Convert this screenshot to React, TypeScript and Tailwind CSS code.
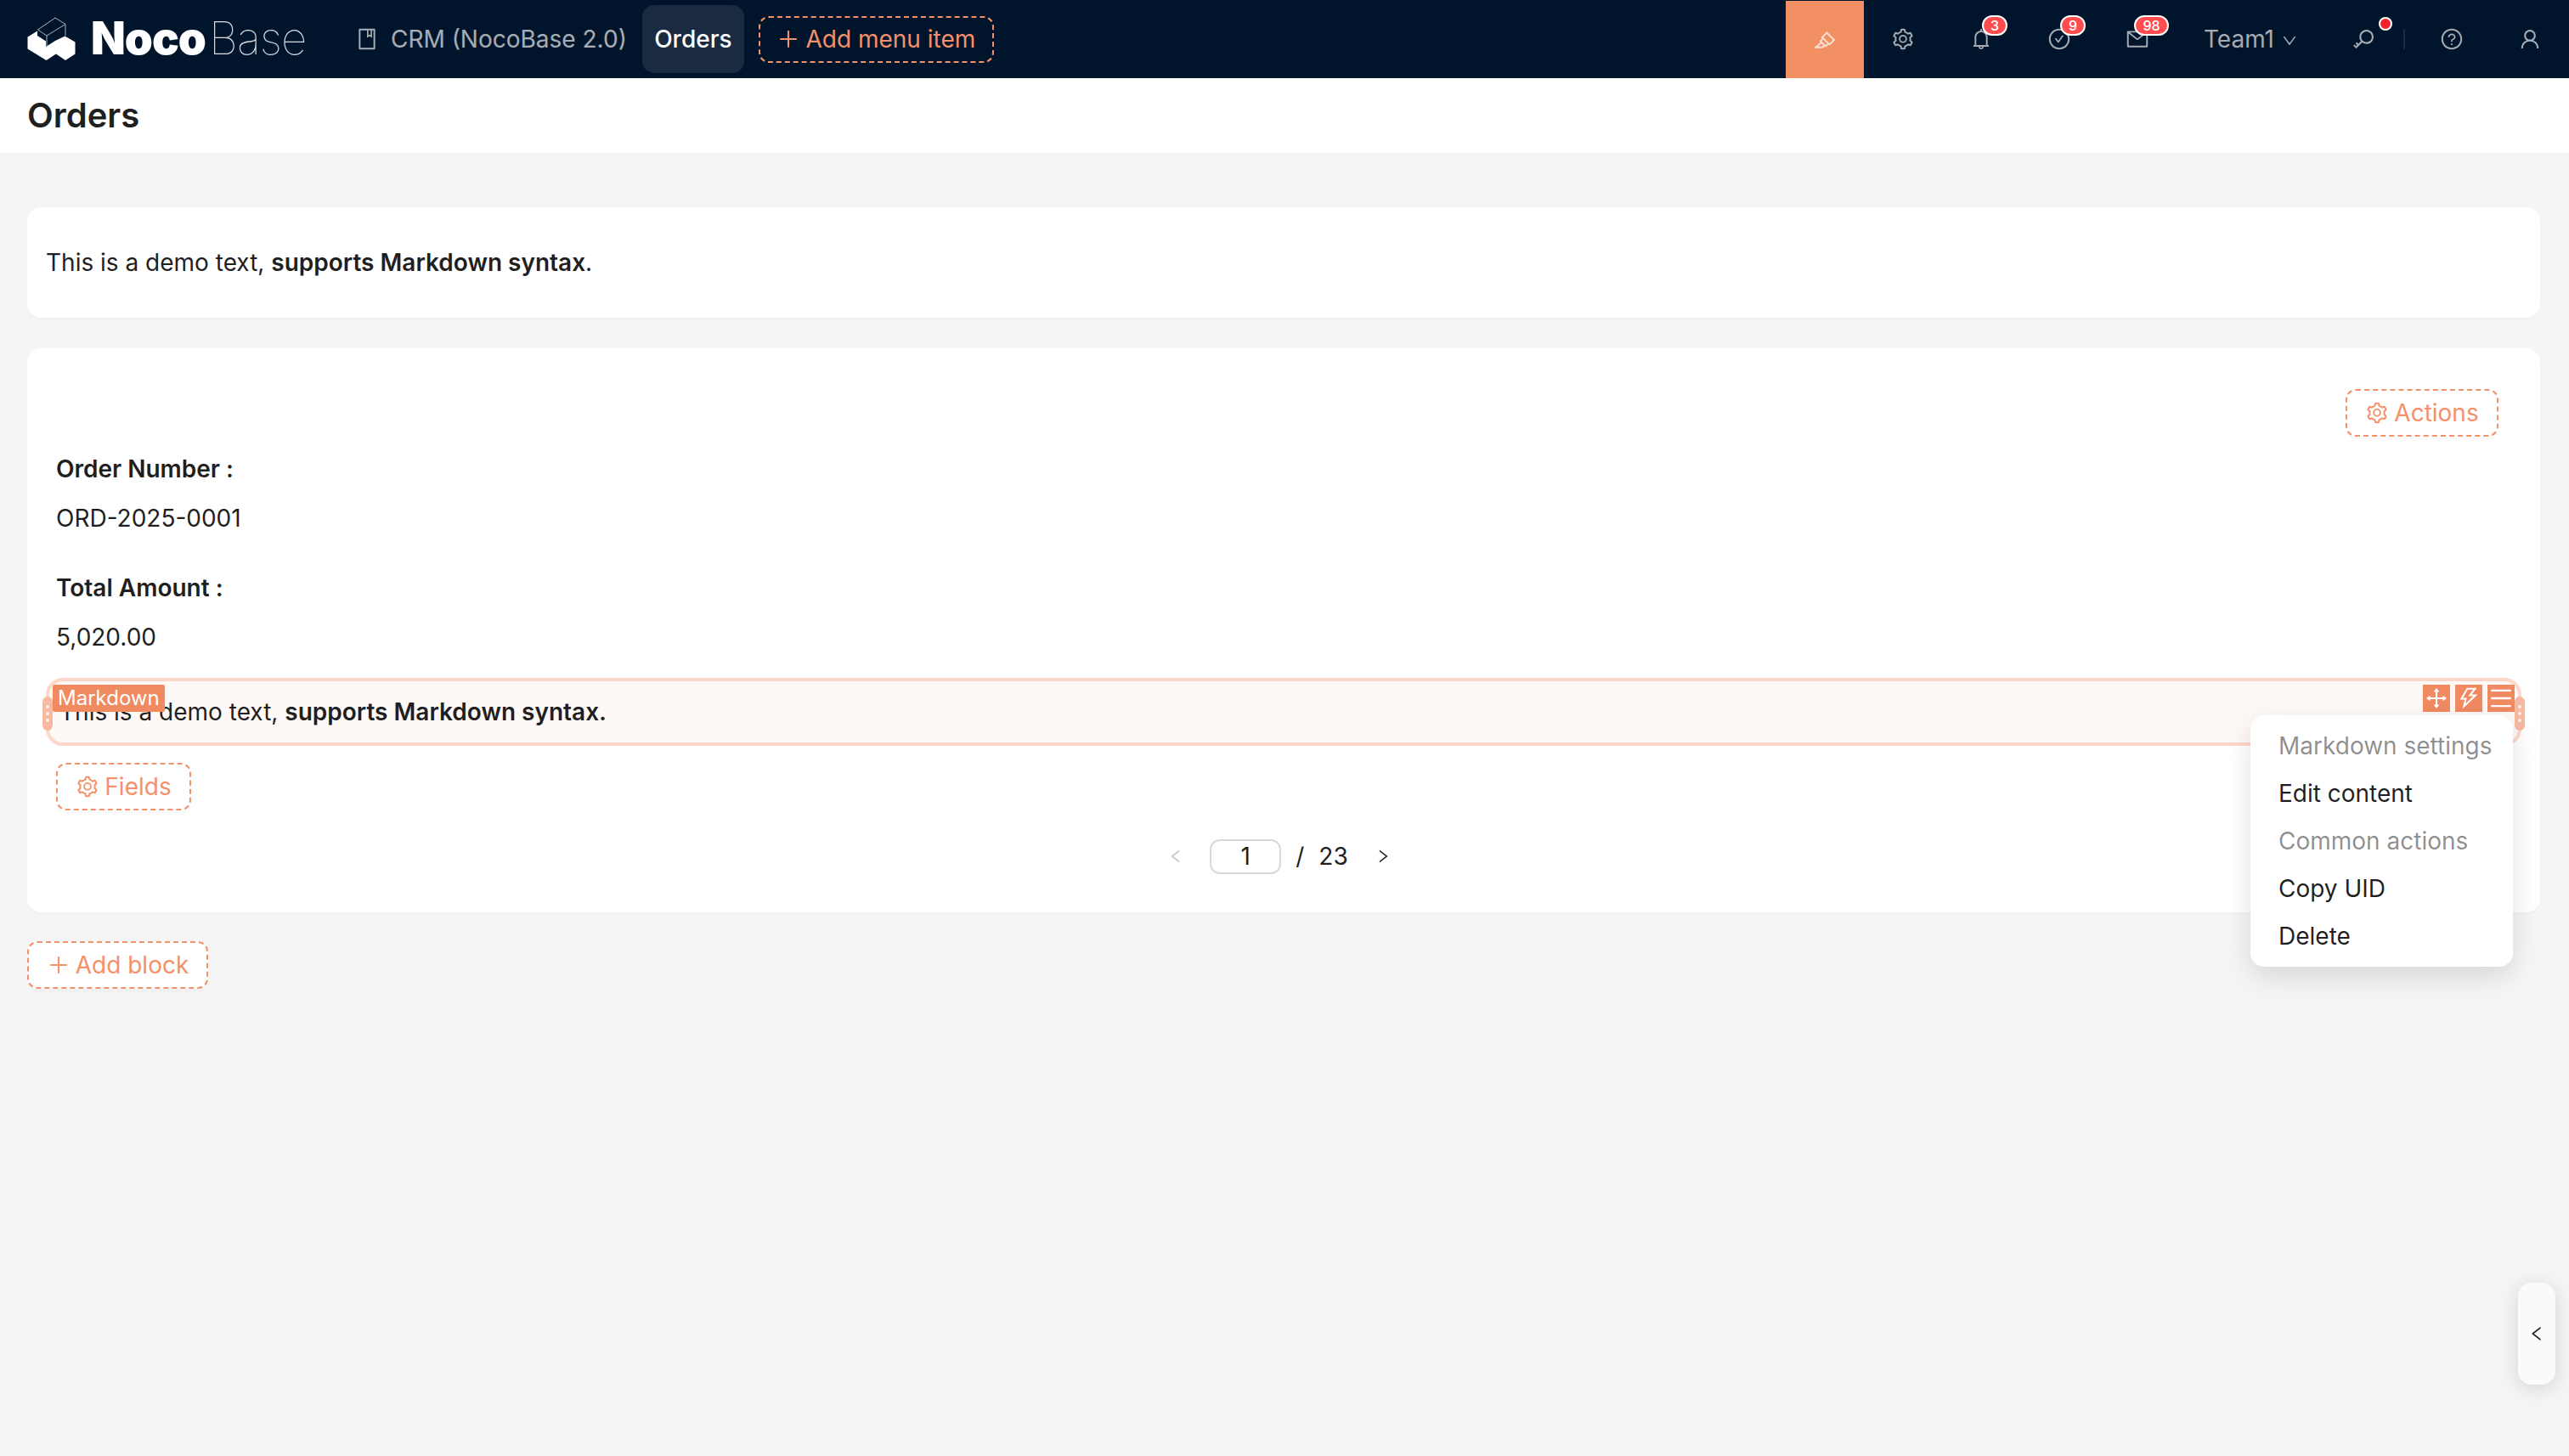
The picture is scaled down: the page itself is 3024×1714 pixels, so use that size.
import type { ReactNode } from 'react';
import {
  AiOutlineBell,
  AiOutlineBook,
  AiOutlineCheckCircle,
  AiOutlineDown,
  AiOutlineDrag,
  AiOutlineHighlight,
  AiOutlineKey,
  AiOutlineLeft,
  AiOutlineMail,
  AiOutlineMenu,
  AiOutlinePlus,
  AiOutlineQuestionCircle,
  AiOutlineRight,
  AiOutlineSetting,
  AiOutlineThunderbolt,
  AiOutlineUser,
} from 'react-icons/ai';

const Logo = () => (
  <svg viewBox="32 20 58 52" className="w-[58px] h-[52px] shrink-0">
    <path
      d="M32.5 43.5 L44 36.5 L44 42 L54 48.5 L54 55 L65 48 L76.5 42.5 L88.5 49.5 L88.5 63.5 L77 71 L66 63.5 L54.5 71 L32.5 57.5 Z"
      fill="#fff"
    />
    <path
      d="M65 21 L77 28.5 L55 42 L44.5 35 Z M55 42 L55 55 M77 28.5 L77 42"
      fill="none"
      stroke="#aeb4bb"
      strokeWidth="1"
    />
  </svg>
);

const Badge = ({ children, className }: { children: ReactNode; className: string }) => (
  <span
    className={`absolute top-[18px] h-[24px] rounded-full bg-[#ff4d4f] border-2 border-white text-white text-[16px] leading-[20px] text-center font-medium ${className}`}
  >
    {children}
  </span>
);

const HeaderIcon = ({ children }: { children: ReactNode }) => (
  <div className="relative w-[92px] h-[92px] flex items-center justify-center text-[#a6abb3] text-[28px]">
    {children}
  </div>
);

const DashedButton = ({
  icon,
  label,
  className,
}: {
  icon: ReactNode;
  label: string;
  className: string;
}) => (
  <div
    className={`flex items-center justify-center gap-[6px] h-[56px] rounded-[12px] border-2 border-dashed border-[#f4906a] bg-white text-[#f4906a] text-[28px] shadow-[0_4px_0_rgba(0,0,0,0.015)] ${className}`}
  >
    <span className="text-[28px]">{icon}</span>
    {label}
  </div>
);

const DotHandle = ({ className }: { className: string }) => (
  <div
    className={`absolute top-[18px] w-[12px] h-[40px] rounded-[6px] bg-[#f7b9a1] flex flex-col items-center justify-center gap-[4px] ${className}`}
  >
    <span className="w-[4px] h-[4px] rounded-full bg-white/80" />
    <span className="w-[4px] h-[4px] rounded-full bg-white/80" />
    <span className="w-[4px] h-[4px] rounded-full bg-white/80" />
  </div>
);

const ToolButton = ({ children }: { children: ReactNode }) => (
  <div className="w-[32px] h-[32px] bg-[#ef8a61] text-white flex items-center justify-center text-[30px]">
    {children}
  </div>
);

const menuItems = [
  { label: 'Markdown settings', muted: true },
  { label: 'Edit content', muted: false },
  { label: 'Common actions', muted: true },
  { label: 'Copy UID', muted: false },
  { label: 'Delete', muted: false },
];

export default function App() {
  return (
    <div className="relative min-h-[1714px] bg-[#f5f5f5] font-[Inter,sans-serif] text-[28px] text-[#1f1f1f] overflow-hidden">
      {/* top bar */}
      <header className="h-[92px] bg-[#00152b] flex items-center pl-[32px]">
        <Logo />
        <div className="flex items-baseline ml-[17px] w-[262px] text-white text-[53px] leading-none tracking-[-1px] relative top-[-1px]">
          <span className="font-black">Noco</span>
          <span className="font-thin ml-[4px] text-[#d7dade]">Base</span>
        </div>
        <div className="flex items-center ml-[50px] text-white/65">
          <AiOutlineBook className="text-[28px] -ml-[1px]" />
          <span className="ml-[14px]">CRM (NocoBase 2.0)</span>
        </div>
        <div className="ml-[18px] w-[120px] h-[80px] rounded-[14px] bg-[#1a2a40] text-white font-medium flex items-center justify-center">
          Orders
        </div>
        <div className="ml-[17px] w-[277px] h-[55px] rounded-[12px] border-2 border-dashed border-[#f4906a] text-[#f4906a] flex items-center justify-center gap-[6px]">
          <AiOutlinePlus className="text-[28px]" />
          Add menu item
        </div>

        <div className="ml-auto flex items-center h-full pr-[-1px]">
          <div className="w-[92px] h-[91px] mt-[1px] bg-[#f39063] flex items-center justify-center text-white/70 text-[28px]">
            <AiOutlineHighlight />
          </div>
          <HeaderIcon>
            <AiOutlineSetting />
          </HeaderIcon>
          <HeaderIcon>
            <AiOutlineBell />
            <Badge className="left-[47px] w-[30px]">3</Badge>
          </HeaderIcon>
          <HeaderIcon>
            <AiOutlineCheckCircle />
            <Badge className="left-[47px] w-[30px]">9</Badge>
          </HeaderIcon>
          <HeaderIcon>
            <AiOutlineMail />
            <Badge className="left-[42px] w-[41px]">98</Badge>
          </HeaderIcon>
          <div className="flex items-center ml-[32px] text-[#a6abb3]">
            Team1
            <AiOutlineDown className="ml-[8px] text-[20px] mt-[4px]" />
          </div>
          <div className="relative ml-[32px] w-[92px] h-[92px] flex items-center justify-center text-[#a6abb3]">
            <AiOutlineKey className="text-[28px]" />
            <span className="absolute top-[20px] left-[63px] w-[16px] h-[16px] rounded-full bg-[#f5222d] border-2 border-white" />
          </div>
          <div className="w-[2px] h-[24px] bg-white/10 mr-[9px]" />
          <HeaderIcon>
            <AiOutlineQuestionCircle />
          </HeaderIcon>
          <HeaderIcon>
            <AiOutlineUser />
          </HeaderIcon>
        </div>
      </header>

      {/* page title */}
      <div className="h-[88px] bg-white flex items-center px-[32px] text-[40px] leading-none font-semibold">
        Orders
      </div>

      <main className="px-[32px] pt-[64px] pr-[34px]">
        <div className="h-[130px] bg-white rounded-[16px] flex items-center pl-[22px] shadow-[0_1px_2px_rgba(0,0,0,0.03)]">
          <p>
            This is a demo text, <b className="font-semibold">supports Markdown syntax</b>.
          </p>
        </div>

        <div className="mt-[36px] h-[664px] bg-white rounded-[16px] pt-[48px] px-[22px] shadow-[0_1px_2px_rgba(0,0,0,0.03)]">
          <div className="flex justify-end pr-[27px]">
            <DashedButton
              icon={<AiOutlineSetting className="text-[28px]" />}
              label="Actions"
              className="w-[180px]"
            />
          </div>

          <div className="pl-[12px] mt-[16px] leading-[44px]">
            <div className="font-semibold">Order Number :</div>
            <div className="mt-[14px]">ORD-2025-0001</div>
            <div className="mt-[38px] font-semibold">Total Amount :</div>
            <div className="mt-[14px]">5,020.00</div>
          </div>

          {/* markdown block in edit state */}
          <div className="relative mt-[26px] h-[80px] rounded-[20px] border-4 border-[#fdd8ca] bg-[#fef9f6] flex items-center pl-[12px]">
            <p>
              This is a demo text, <b className="font-semibold">supports Markdown syntax.</b>
            </p>
            <DotHandle className="left-[-8px]" />
            <DotHandle className="right-[-8px]" />
            <div className="absolute left-[4px] top-[4px] h-[32px] px-[6px] bg-[#ef8a61] text-white text-[24px] leading-[32px] rounded-[2px]">
              Markdown
            </div>
            <div className="absolute right-[4px] top-[4px] flex gap-[6px]">
              <ToolButton>
                <AiOutlineDrag />
              </ToolButton>
              <ToolButton>
                <AiOutlineThunderbolt />
              </ToolButton>
              <ToolButton>
                <AiOutlineMenu />
              </ToolButton>
            </div>
          </div>

          <div className="pl-[12px] mt-[20px] flex">
            <DashedButton
              icon={<AiOutlineSetting className="text-[28px]" />}
              label="Fields"
              className="w-[159px]"
            />
          </div>

          {/* pagination */}
          <div className="mt-[33px] flex items-center justify-center pr-[10px]">
            <AiOutlineLeft className="text-[20px] text-[#bfbfbf]" />
            <div className="ml-[30px] w-[84px] h-[41px] rounded-[12px] border-2 border-[#d9d9d9] flex items-center justify-center">
              1
            </div>
            <span className="ml-[17px]">/</span>
            <span className="ml-[17px]">23</span>
            <AiOutlineRight className="ml-[31px] text-[20px]" />
          </div>
        </div>

        <div className="mt-[34px] flex">
          <DashedButton
            icon={<AiOutlinePlus className="text-[28px]" />}
            label="Add block"
            className="w-[213px]"
          />
        </div>
      </main>

      {/* settings dropdown */}
      <div className="absolute left-[2649px] top-[842px] w-[309px] h-[296px] rounded-[16px] bg-white py-[8px] px-[33px] shadow-[0_12px_32px_rgba(0,0,0,0.12)]">
        {menuItems.map((item) => (
          <div
            key={item.label}
            className={`h-[56px] flex items-center whitespace-nowrap ${item.muted ? 'text-black/45' : 'text-black/88'}`}
          >
            {item.label}
          </div>
        ))}
      </div>

      {/* side drawer handle */}
      <div className="absolute left-[2964px] top-[1510px] w-[44px] h-[120px] rounded-[16px] bg-[#fafafa] flex items-center justify-center text-[22px] text-[#1f1f1f] shadow-[0_4px_24px_rgba(0,0,0,0.14)]">
        <AiOutlineLeft />
      </div>
    </div>
  );
}
